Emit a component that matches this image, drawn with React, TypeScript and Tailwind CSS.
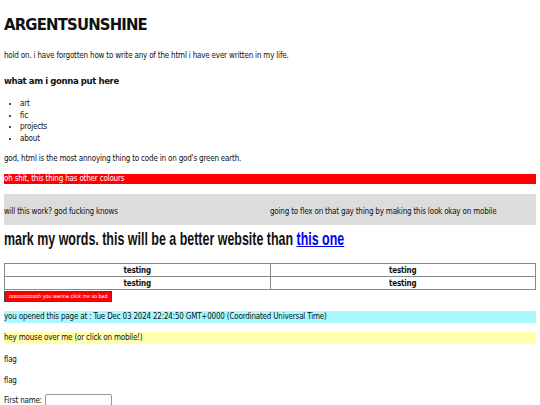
export default function App() {
  const body = "font-['DejaVu_Sans_Condensed','DejaVu_Sans',sans-serif]";
  return (
    <div className={`${body} text-[8px] leading-[11px] tracking-[-0.2px] text-[#111] px-[4px] bg-white min-h-[405px] overflow-hidden`}>
      <h1 className="text-[16.5px] font-bold leading-[20px] pt-[15px] tracking-[-0.8px]">ARGENTSUNSHINE</h1>
      <p className="mt-[15px]">hold on. i have forgotten how to write any of the html i have ever written in my life.</p>
      <h3 className="mt-[13px] text-[9.5px] font-bold leading-[13px] tracking-[-0.4px]">what am i gonna put here</h3>

      <ul className="mt-[11px] pl-[16px] list-disc leading-[11.5px]">
        <li>art</li>
        <li>fic</li>
        <li>projects</li>
        <li>about</li>
      </ul>

      <p className="mt-[9px]">god, html is the most annoying thing to code in on god's green earth.</p>

      <div className="mt-[10px] bg-[#ff0000] text-white h-[10px] leading-[10px]">oh shit, this thing has other colours</div>

      <div className="mt-[10px] bg-[#dcdcdc] h-[31px] flex items-center pt-[4px]">
        <div className="flex-1">will this work? god fucking knows</div>
        <div className="flex-1">going to flex on that gay thing by making this look okay on mobile</div>
      </div>

      <h1 className="mt-[2px] font-['Liberation_Sans',Arial,sans-serif] text-[19px] leading-[24px] font-bold tracking-normal whitespace-nowrap origin-left scale-x-[0.655]">
        mark my words. this will be a better website than{" "}
        <a href="#" className="text-[#0000ee] underline">this one</a>
      </h1>

      <table className="mt-[12px] w-full border-collapse border border-[#888] font-bold">
        <tbody>
          <tr>
            <td className="border border-[#888] text-center h-[13px] leading-[11px] p-0">testing</td>
            <td className="border border-[#888] text-center h-[13px] leading-[11px] p-0">testing</td>
          </tr>
          <tr>
            <td className="border border-[#888] text-center h-[13px] leading-[11px] p-0">testing</td>
            <td className="border border-[#888] text-center h-[13px] leading-[11px] p-0">testing</td>
          </tr>
        </tbody>
      </table>

      <button className="mt-[1px] block bg-[#ff0000] text-white border border-[#444] text-[5.5px] leading-[9px] px-[4px] whitespace-nowrap tracking-[-0.1px]">
        ooooooooooh you wanna click me so bad
      </button>

      <div className="mt-[9px] bg-[#a9f9ff] h-[12px] leading-[12px]">
        you opened this page at : Tue Dec 03 2024 22:24:50 GMT+0000 (Coordinated Universal Time)
      </div>

      <div className="mt-[9px] bg-[#ffffad] h-[12px] leading-[12px]">hey mouse over me (or click on mobile!)</div>

      <p className="mt-[10px]">flag</p>
      <p className="mt-[10px]">flag</p>

      <div className="mt-[8px] flex items-center gap-[3px]">
        <label>First name:</label>
        <input className="w-[67px] h-[12px] border border-[#999] rounded-[2px] bg-white" />
      </div>
    </div>
  );
}
